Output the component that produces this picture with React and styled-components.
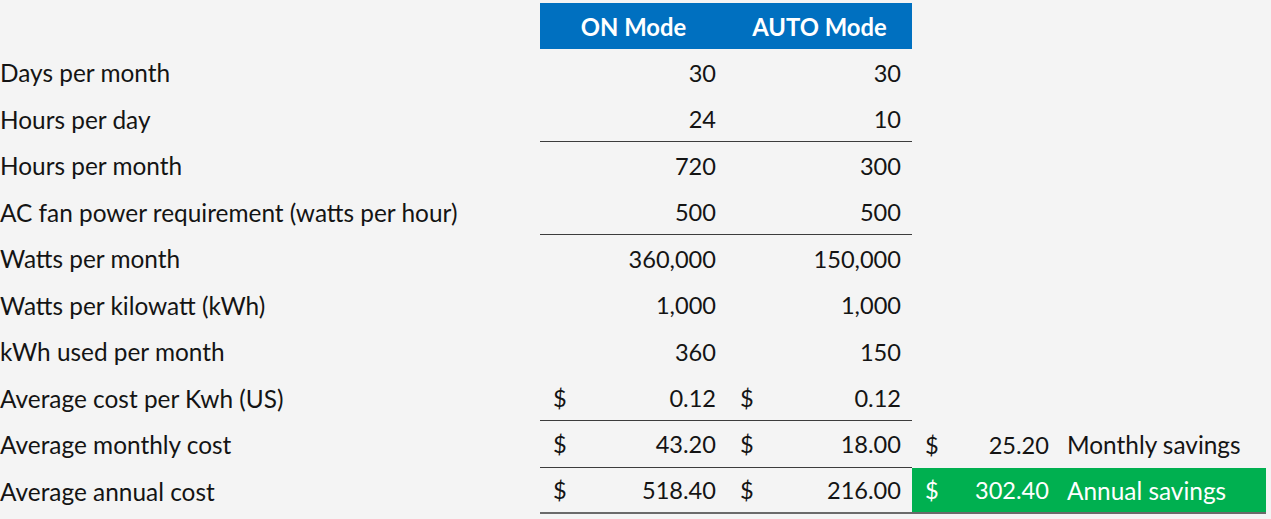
import React from "react";
import styled, { createGlobalStyle, css } from "styled-components";

const GlobalStyle = createGlobalStyle`
  html, body {
    margin: 0;
    padding: 0;
    background: #f4f4f4;
  }
  body {
    font-family: Lato, "Open Sans", sans-serif;
    color: #141414;
  }
`;

const COLS = "540px 187px 185px 148px 206px";

const Sheet = styled.div`
  padding-top: 3px;
  width: 1271px;
`;

const Row = styled.div`
  display: grid;
  grid-template-columns: ${COLS};
  height: ${(props) => (props.$head ? "46px" : "46.5px")};
`;

const Label = styled.div`
  display: flex;
  align-items: center;
  padding-top: 1px;
  font-size: 24.4px;
  white-space: nowrap;
`;

const Head = styled.div`
  display: flex;
  align-items: center;
  justify-content: center;
  padding-top: 1px;
  background: #0070c0;
  color: #fff;
  font-weight: 700;
  font-size: 23.8px;
`;

const Cell = styled.div`
  box-sizing: border-box;
  display: flex;
  align-items: center;
  justify-content: space-between;
  padding: 1px 11px 0 13px;
  font-size: 23.6px;
  white-space: nowrap;
  ${(props) =>
    props.$rule &&
    css`
      border-bottom: 1px solid #3c3c3c;
    `};
  ${(props) =>
    props.$total &&
    css`
      border-bottom: 2px solid #6a6a6a;
    `};
  ${(props) =>
    props.$green &&
    css`
      background: #00b050;
      color: #fff;
    `};
`;

const Note = styled(Cell)`
  justify-content: flex-start;
  padding-left: 7px;
  font-size: 24.4px;
`;

const Value = styled.span`
  margin-left: auto;
`;

const Money = ({ amount, ...rest }) => (
  <Cell {...rest}>
    <span>$</span>
    <Value>{amount}</Value>
  </Cell>
);

const plain = [
  ["Days per month", "30", "30"],
  ["Hours per day", "24", "10", true],
  ["Hours per month", "720", "300"],
  ["AC fan power requirement (watts per hour)", "500", "500", true],
  ["Watts per month", "360,000", "150,000"],
  ["Watts per kilowatt (kWh)", "1,000", "1,000"],
  ["kWh used per month", "360", "150"],
];

export default function App() {
  return (
    <>
      <GlobalStyle />
      <Sheet>
        <Row $head>
          <div />
          <Head>ON Mode</Head>
          <Head>AUTO Mode</Head>
        </Row>
        {plain.map(([label, on, auto, rule]) => (
          <Row key={label}>
            <Label>{label}</Label>
            <Cell $rule={rule}>
              <Value>{on}</Value>
            </Cell>
            <Cell $rule={rule}>
              <Value>{auto}</Value>
            </Cell>
          </Row>
        ))}
        <Row>
          <Label>Average cost per Kwh (US)</Label>
          <Money amount="0.12" $rule />
          <Money amount="0.12" $rule />
        </Row>
        <Row>
          <Label>Average monthly cost</Label>
          <Money amount="43.20" $rule />
          <Money amount="18.00" $rule />
          <Money amount="25.20" />
          <Note>Monthly savings</Note>
        </Row>
        <Row>
          <Label>Average annual cost</Label>
          <Money amount="518.40" $total />
          <Money amount="216.00" $total />
          <Money amount="302.40" $total $green />
          <Note $total $green>
            Annual savings
          </Note>
        </Row>
      </Sheet>
    </>
  );
}
